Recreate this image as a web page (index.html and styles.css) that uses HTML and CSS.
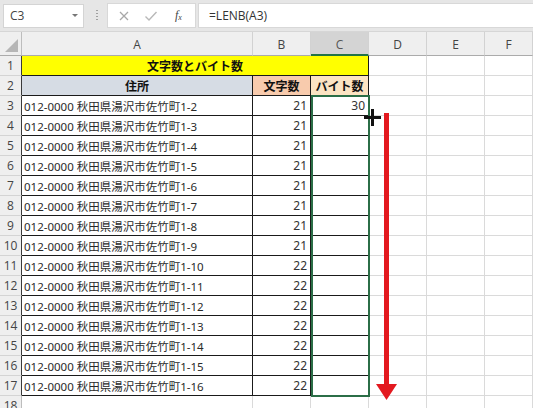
FILE: index.html
```html
<!DOCTYPE html>
<html lang="ja">
<head>
<meta charset="utf-8">
<link rel="stylesheet" href="styles.css">
</head>
<body>
<div class="app">
  <div class="toolbar">
    <div class="namebox"><span>C3</span><span class="dd"></span></div>
    <div class="dots"></div>
    <div class="iconbox">
      <svg class="ico" width="12" height="12" viewBox="0 0 12 12"><path d="M2 2 L10 10 M10 2 L2 10" stroke="#a8a8a8" stroke-width="1.3" fill="none"/></svg>
      <svg class="ico" width="14" height="12" viewBox="0 0 14 12"><path d="M1.5 6.5 L5 10 L12.5 2" stroke="#b8b8b8" stroke-width="1.4" fill="none"/></svg>
      <span class="fx"><i>f</i><sub>x</sub></span>
    </div>
    <div class="formula">=LENB(A3)</div>
  </div>

  <div class="sheet">
    <div class="ch corner"><span class="tri"></span></div>
    <div class="ch">A</div><div class="ch">B</div><div class="ch sel">C</div><div class="ch">D</div><div class="ch">E</div><div class="ch">F</div>

    <div class="rh">1</div><div class="t title">文字数とバイト数</div><div class="c"></div><div class="c"></div><div class="c"></div>
    <div class="rh">2</div><div class="t hdr ha">住所</div><div class="t hdr hb">文字数</div><div class="t hdr hc">バイト数</div><div class="c"></div><div class="c"></div><div class="c"></div>

    <div class="rh">3</div><div class="t a">012-0000 秋田県湯沢市佐竹町1-2</div><div class="t n">21</div><div class="t n">30</div><div class="c"></div><div class="c"></div><div class="c"></div>
    <div class="rh">4</div><div class="t a">012-0000 秋田県湯沢市佐竹町1-3</div><div class="t n">21</div><div class="t n"></div><div class="c"></div><div class="c"></div><div class="c"></div>
    <div class="rh">5</div><div class="t a">012-0000 秋田県湯沢市佐竹町1-4</div><div class="t n">21</div><div class="t n"></div><div class="c"></div><div class="c"></div><div class="c"></div>
    <div class="rh">6</div><div class="t a">012-0000 秋田県湯沢市佐竹町1-5</div><div class="t n">21</div><div class="t n"></div><div class="c"></div><div class="c"></div><div class="c"></div>
    <div class="rh">7</div><div class="t a">012-0000 秋田県湯沢市佐竹町1-6</div><div class="t n">21</div><div class="t n"></div><div class="c"></div><div class="c"></div><div class="c"></div>
    <div class="rh">8</div><div class="t a">012-0000 秋田県湯沢市佐竹町1-7</div><div class="t n">21</div><div class="t n"></div><div class="c"></div><div class="c"></div><div class="c"></div>
    <div class="rh">9</div><div class="t a">012-0000 秋田県湯沢市佐竹町1-8</div><div class="t n">21</div><div class="t n"></div><div class="c"></div><div class="c"></div><div class="c"></div>
    <div class="rh">10</div><div class="t a">012-0000 秋田県湯沢市佐竹町1-9</div><div class="t n">21</div><div class="t n"></div><div class="c"></div><div class="c"></div><div class="c"></div>
    <div class="rh">11</div><div class="t a">012-0000 秋田県湯沢市佐竹町1-10</div><div class="t n">22</div><div class="t n"></div><div class="c"></div><div class="c"></div><div class="c"></div>
    <div class="rh">12</div><div class="t a">012-0000 秋田県湯沢市佐竹町1-11</div><div class="t n">22</div><div class="t n"></div><div class="c"></div><div class="c"></div><div class="c"></div>
    <div class="rh">13</div><div class="t a">012-0000 秋田県湯沢市佐竹町1-12</div><div class="t n">22</div><div class="t n"></div><div class="c"></div><div class="c"></div><div class="c"></div>
    <div class="rh">14</div><div class="t a">012-0000 秋田県湯沢市佐竹町1-13</div><div class="t n">22</div><div class="t n"></div><div class="c"></div><div class="c"></div><div class="c"></div>
    <div class="rh">15</div><div class="t a">012-0000 秋田県湯沢市佐竹町1-14</div><div class="t n">22</div><div class="t n"></div><div class="c"></div><div class="c"></div><div class="c"></div>
    <div class="rh">16</div><div class="t a">012-0000 秋田県湯沢市佐竹町1-15</div><div class="t n">22</div><div class="t n"></div><div class="c"></div><div class="c"></div><div class="c"></div>
    <div class="rh">17</div><div class="t a">012-0000 秋田県湯沢市佐竹町1-16</div><div class="t n">22</div><div class="t n"></div><div class="c"></div><div class="c"></div><div class="c"></div>
    <div class="rh last">18</div><div class="c"></div><div class="c"></div><div class="c"></div><div class="c"></div><div class="c"></div><div class="c"></div>

    <div class="selbox"></div>
    <svg class="cursor" width="19" height="19" viewBox="0 0 19 19"><path d="M9.5 1 V18 M1 9.5 H18" stroke="#111" stroke-width="3" fill="none"/></svg>
    <svg class="arrow" width="24" height="290" viewBox="0 0 24 290"><rect x="9" y="0" width="5" height="274" fill="#e3191f"/><polygon points="1,271 22,271 11.5,287" fill="#e3191f"/></svg>
  </div>
</div>
</body>
</html>
```
FILE: styles.css
```css
html, body {
  margin: 0;
  padding: 0;
  background: #ffffff;
}
.app {
  width: 533px;
  height: 408px;
  overflow: hidden;
  font-family: "Noto Sans CJK JP", "Noto Sans", sans-serif;
}
.toolbar {
  height: 32px;
  box-sizing: border-box;
  background: #e6e6e6;
  display: flex;
  align-items: center;
  padding: 0 0 0 3px;
  border-bottom: 1px solid #d6d6d6;
}
.namebox {
  width: 81px;
  height: 24px;
  background: #fff;
  box-sizing: border-box;
  border: 1px solid #d4d4d4;
  display: flex;
  align-items: center;
  justify-content: space-between;
  padding: 0 5px 0 6px;
  font-family: "Open Sans", "Noto Sans", sans-serif;
  font-size: 12px;
  color: #444;
}
.dd {
  width: 0;
  height: 0;
  border-left: 3px solid transparent;
  border-right: 3px solid transparent;
  border-top: 3px solid #777;
}
.dots {
  margin-left: 12px;
  width: 2px;
  height: 12px;
  background: repeating-linear-gradient(to bottom, #a0a0a0 0 1px, transparent 1px 3px);
}
.iconbox {
  margin-left: 9px;
  width: 89px;
  height: 25px;
  background: #fff;
  box-sizing: border-box;
  border: 1px solid #d8d8d8;
  display: flex;
  align-items: center;
  padding-left: 10px;
}
.ico:first-child { margin-right: 14px; }
.ico { display: block; }
.fx {
  margin-left: 17px;
  font-family: "Liberation Serif", serif;
  font-size: 12px;
  color: #444;
  line-height: 1;
}
.fx i { font-style: italic; }
.fx sub { font-size: 8px; font-style: italic; vertical-align: -1px; }
.formula {
  margin-left: 2px;
  flex: 1;
  height: 25px;
  background: #fff;
  box-sizing: border-box;
  border: 1px solid #d8d8d8;
  border-right: none;
  display: flex;
  align-items: center;
  padding-left: 10px;
  font-family: "Open Sans", "Noto Sans", sans-serif;
  font-size: 12px;
  color: #333;
}
.sheet {
  position: relative;
  display: grid;
  grid-template-columns: 22px 231px 58px 58px 58px 58px 48px;
  grid-template-rows: 24px repeat(18, 20px);
}
.sheet > div {
  box-sizing: border-box;
  display: flex;
  align-items: center;
  white-space: nowrap;
  overflow: hidden;
}
.ch {
  background: #efefef;
  border-right: 1px solid #d2d2d2;
  border-bottom: 1px solid #ababab;
  justify-content: center;
  padding-top: 2px;
  font-family: "Open Sans", "Noto Sans", sans-serif;
  font-size: 12px;
  color: #444;
}
.ch.sel {
  background: #d4d4d4;
  border-bottom: 2px solid #217346;
  color: #555;
}
.corner {
  position: relative;
  border-right: 1px solid #bdbdbd;
}
.tri {
  position: absolute;
  right: 3px;
  bottom: 3px;
  width: 0;
  height: 0;
  border-left: 13px solid transparent;
  border-bottom: 13px solid #b6b6b6;
}
.rh {
  background: #efefef;
  border-right: 1px solid #3a3a3a;
  border-bottom: 1px solid #d4d4d4;
  justify-content: center;
  font-family: "Open Sans", "Noto Sans", sans-serif;
  font-size: 12px;
  color: #444;
}
.rh.last {
  border-right: 1px solid #bdbdbd;
  align-items: flex-start;
  padding-top: 1px;
}
.c {
  border-right: 1px solid #dadada;
  border-bottom: 1px solid #dadada;
}
.t {
  border-right: 1px solid #1a1a1a;
  border-bottom: 1px solid #1a1a1a;
  font-size: 11px;
  color: #222;
}
.title {
  grid-column: span 3;
  background: #ffff00;
  justify-content: center;
  font-weight: bold;
  font-size: 12px;
  color: #111;
}
.hdr {
  justify-content: center;
  font-weight: bold;
  font-size: 12px;
  color: #111;
}
.ha { background: #d6dce4; }
.hb { background: #f8cbad; }
.hc { background: #fce4c3; }
.a {
  padding-left: 2px;
  font-family: "Noto Sans", "Noto Sans CJK JP", sans-serif;
  font-size: 11.5px;
  color: #2a2a2a;
}
.n {
  justify-content: flex-end;
  padding-right: 3px;
  font-family: "Noto Sans", sans-serif;
  font-size: 12px;
  color: #333;
}
.selbox {
  position: absolute;
  left: 311px;
  top: 63px;
  width: 59px;
  height: 302px;
  box-sizing: border-box;
  border: 2px solid #2b6e47;
}
.cursor {
  position: absolute;
  left: 363px;
  top: 76px;
}
.arrow {
  position: absolute;
  left: 375px;
  top: 81px;
}
```
